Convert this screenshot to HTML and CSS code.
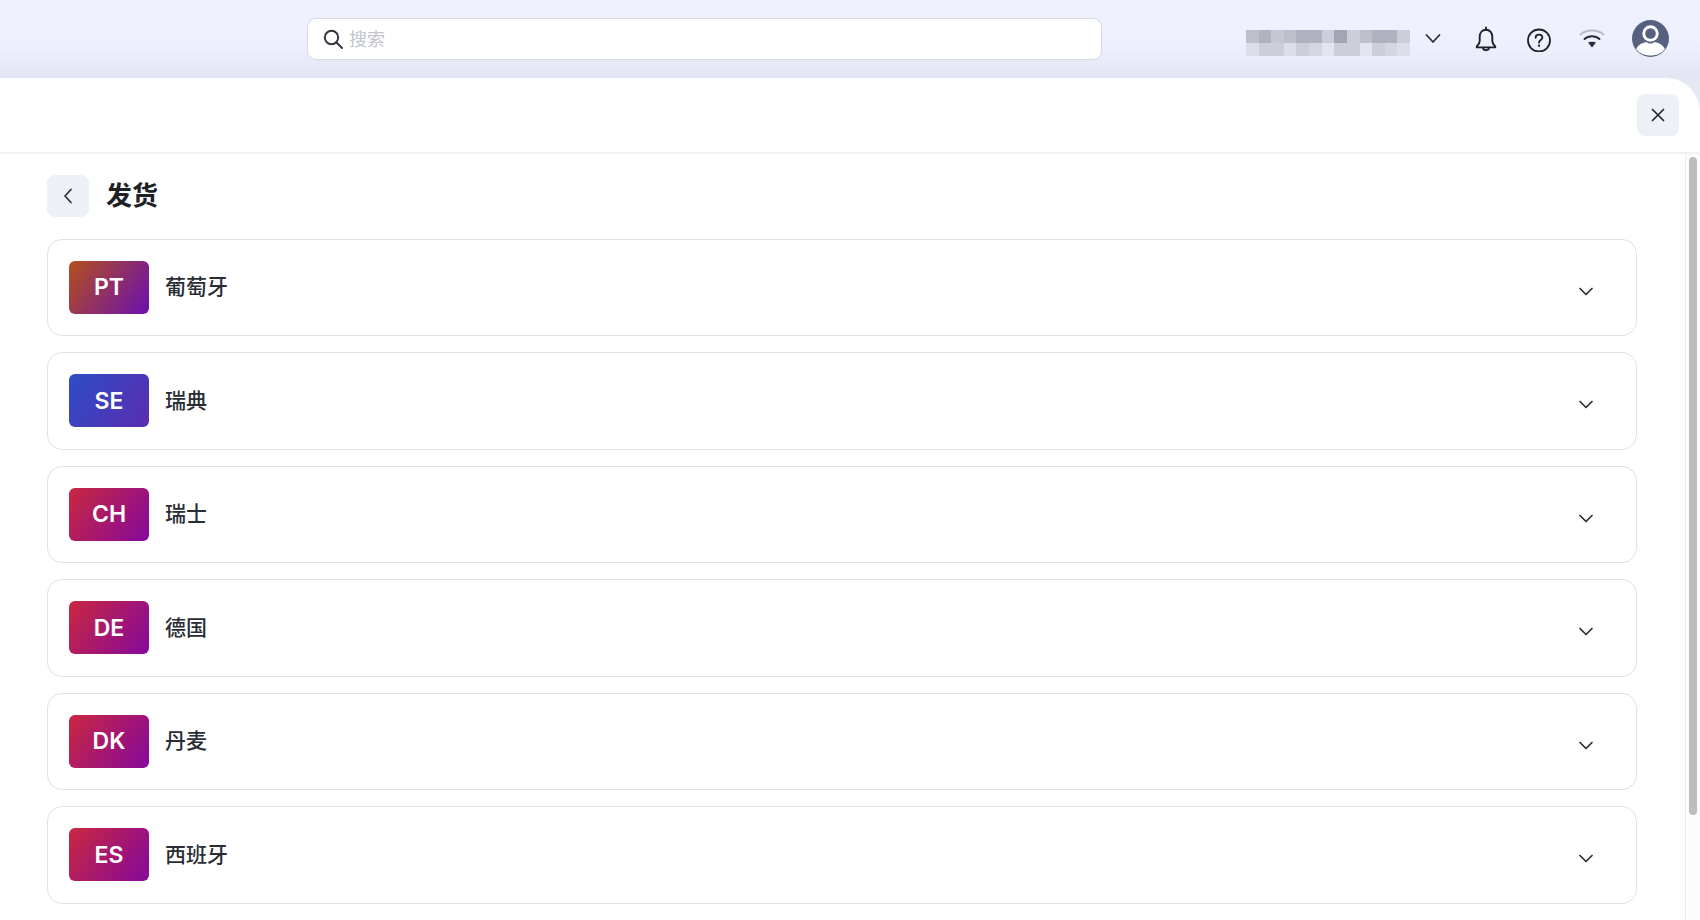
FILE: index.html
```html
<!DOCTYPE html>
<html lang="zh-CN">
<head>
<meta charset="utf-8">
<title>发货</title>
<link rel="stylesheet" href="styles.css">
</head>
<body>
<header class="topbar">
  <div class="search">
    <svg class="search-icon" viewBox="0 0 22 22" width="22" height="22" fill="none" stroke="#33363f" stroke-width="2" stroke-linecap="round"><circle cx="9.5" cy="9.5" r="6.7"/><path d="M14.5 14.5 20 20"/></svg>
    <span class="search-text">搜索</span>
  </div>
  <div class="account">
    <div class="mosaic">
      <i class="s3"></i><i class="s2"></i><i class="s4"></i><i class="s3"></i><i class="s2"></i><i class="s2"></i><i class="s5"></i><i class="s1"></i><i class="s5"></i><i class="s3"></i><i class="s2"></i><i class="s2"></i><i class="s5"></i>
      <i class="s7"></i><i class="s5"></i><i class="s5"></i><i class="s7"></i><i class="s5"></i><i class="s6"></i><i class="s8"></i><i class="s5"></i><i class="s5"></i><i class="s8"></i><i class="s5"></i><i class="s6"></i><i class="s7"></i>
    </div>
    <svg class="icon" viewBox="0 0 26 26" width="26" height="26" fill="none" stroke="#2b2e37" stroke-width="1.8" stroke-linecap="round" stroke-linejoin="round"><path d="M6.5 9 13 16 19.5 9"/></svg>
  </div>
  <svg class="icon" viewBox="0 0 26 26" width="26" height="26" fill="none" stroke="#1f2128" stroke-width="1.9" stroke-linejoin="round" stroke-linecap="round"><path d="M13 1.500V3.800"/><path d="M13 3.800C9 3.800 6.700 7 6.700 10.800V15C6.700 17.300 5.600 18.700 3.900 20.300 3.300 20.900 3.600 21.400 4.400 21.400H21.600C22.400 21.400 22.700 20.900 22.100 20.300 20.400 18.700 19.300 17.300 19.300 15V10.800C19.300 7 17 3.800 13 3.800Z"/><path d="M10 21.600C10 23.200 11.300 24.200 13 24.200S16 23.200 16 21.600"/></svg>
  <svg class="icon" viewBox="0 0 26 26" width="26" height="26" fill="none" stroke="#1f2128" stroke-width="1.8" stroke-linecap="round"><circle cx="13" cy="14.500" r="11"/><path d="M9.600 11.800C9.600 9.800 11.100 8.700 13 8.700 15 8.700 16.400 9.900 16.400 11.600 16.400 14.100 13 14.100 13 16.700"/><circle cx="13" cy="19.700" r=".6" fill="#1f2128" stroke-width="1.100"/></svg>
  <svg class="icon" viewBox="0 0 26 26" width="26" height="26" fill="none" stroke-linecap="round"><path d="M1.500 8.500C7.500 3.200 18.500 3.200 24.500 8.500" stroke="#b9bbc6" stroke-width="1.900"/><path d="M5.500 13C9.500 9.300 16.500 9.300 20.500 13" stroke="#2b2e37" stroke-width="1.900"/><path d="M9 16.600C11.200 15.500 14.800 15.500 17 16.600L13 21.500Z" fill="#2b2e37"/></svg>
  <svg class="avatar" viewBox="0 0 37 37" width="37" height="37"><circle cx="18.500" cy="18.500" r="18.500" fill="#56617f"/><circle cx="18.500" cy="13.500" r="8.200" fill="#fff"/><circle cx="18.500" cy="13.500" r="5.300" fill="#56617f"/><path d="M4 29C6.500 24.800 10.500 22.500 14.500 22.100 17 24.100 20 24.100 22.500 22.100 26.500 22.500 30.500 24.800 33 29 29.300 33.500 24.500 35.500 18.500 35.500S7.700 33.500 4 29Z" fill="#fff"/></svg>
</header>
<main class="panel">
  <div class="panel-head">
    <button class="square-btn" type="button" aria-label="关闭">
      <svg viewBox="0 0 14 14" width="14" height="14" fill="none" stroke="#23252c" stroke-width="1.7" stroke-linecap="round"><path d="M1.500 1.500 12.500 12.500M12.500 1.500 1.500 12.500"/></svg>
    </button>
  </div>
  <div class="body-row">
    <div class="scroller">
      <div class="title-row">
        <button class="square-btn" type="button" aria-label="返回">
          <svg viewBox="0 0 10 16" width="10" height="16" fill="none" stroke="#33363f" stroke-width="1.800" stroke-linecap="round" stroke-linejoin="round"><path d="M8 1.500 2 8 8 14.500"/></svg>
        </button>
        <h1 class="title">发货</h1>
      </div>
      <ul class="list">
        <li class="card"><span class="badge orange">PT</span><span class="name">葡萄牙</span><svg class="chev" viewBox="0 0 14 9" width="14" height="9" fill="none" stroke="#2b2e37" stroke-width="1.700" stroke-linecap="round" stroke-linejoin="round"><path d="M1 1.500 7 7.500 13 1.500"/></svg></li>
        <li class="card"><span class="badge blue">SE</span><span class="name">瑞典</span><svg class="chev" viewBox="0 0 14 9" width="14" height="9" fill="none" stroke="#2b2e37" stroke-width="1.700" stroke-linecap="round" stroke-linejoin="round"><path d="M1 1.500 7 7.500 13 1.500"/></svg></li>
        <li class="card"><span class="badge red">CH</span><span class="name">瑞士</span><svg class="chev" viewBox="0 0 14 9" width="14" height="9" fill="none" stroke="#2b2e37" stroke-width="1.700" stroke-linecap="round" stroke-linejoin="round"><path d="M1 1.500 7 7.500 13 1.500"/></svg></li>
        <li class="card"><span class="badge red">DE</span><span class="name">德国</span><svg class="chev" viewBox="0 0 14 9" width="14" height="9" fill="none" stroke="#2b2e37" stroke-width="1.700" stroke-linecap="round" stroke-linejoin="round"><path d="M1 1.500 7 7.500 13 1.500"/></svg></li>
        <li class="card"><span class="badge red">DK</span><span class="name">丹麦</span><svg class="chev" viewBox="0 0 14 9" width="14" height="9" fill="none" stroke="#2b2e37" stroke-width="1.700" stroke-linecap="round" stroke-linejoin="round"><path d="M1 1.500 7 7.500 13 1.500"/></svg></li>
        <li class="card"><span class="badge red">ES</span><span class="name">西班牙</span><svg class="chev" viewBox="0 0 14 9" width="14" height="9" fill="none" stroke="#2b2e37" stroke-width="1.700" stroke-linecap="round" stroke-linejoin="round"><path d="M1 1.500 7 7.500 13 1.500"/></svg></li>
        <li class="card"></li>
      </ul>
    </div>
    <div class="scrollbar"><div class="thumb"></div></div>
  </div>
</main>
</body>
</html>
```
FILE: styles.css
```css
* { box-sizing: border-box; }
html, body { height: 100%; }
body {
  margin: 0;
  height: 920px;
  overflow: hidden;
  display: flex;
  flex-direction: column;
  background: #e6e8f4;
  font-family: Inter, "Noto Sans CJK SC", sans-serif;
  color: #2a2d35;
}

/* top bar */
.topbar {
  flex: none;
  height: 78px;
  display: flex;
  align-items: center;
  gap: 27px;
  padding: 0 31px 0 307px;
  background: linear-gradient(180deg, #eff2fe 0%, #eef1fd 55%, #e3e5f2 100%);
}
.search {
  width: 795px;
  height: 42px;
  margin-right: auto;
  display: flex;
  align-items: center;
  gap: 5px;
  padding-left: 14px;
  background: #fff;
  border: 1.5px solid #d6d8e6;
  border-radius: 9px;
}
.search-icon { flex: none; }
.search-text { font-size: 18px; color: #c3c5cf; margin-bottom: 2px; }
.account { display: flex; align-items: center; gap: 10px; }
.mosaic {
  width: 164px;
  height: 26px;
  margin-top: 7px;
  display: grid;
  grid-template-columns: repeat(13, 1fr);
  grid-template-rows: repeat(2, 1fr);
}
.s1 { background: #a3a5b2; }
.s2 { background: #b0b2bf; }
.s3 { background: #bdbfcb; }
.s4 { background: #c5c7d3; }
.s5 { background: #cccedA; }
.s6 { background: #d4d6e1; }
.s7 { background: #dcdee8; }
.s8 { background: #e2e4ee; }
.icon { flex: none; display: block; }
.avatar { flex: none; display: block; margin-top: -2px; }

/* panel */
.panel {
  flex: 1;
  min-height: 0;
  display: flex;
  flex-direction: column;
  background: #fff;
  border-top-right-radius: 34px;
}
.panel-head {
  flex: none;
  height: 76px;
  display: flex;
  justify-content: flex-end;
  align-items: center;
  padding: 0 21px 0 0;
  border-bottom: 2px solid #f0f1f4;
}
.square-btn {
  width: 42px;
  height: 42px;
  padding: 0;
  display: flex;
  align-items: center;
  justify-content: center;
  border: 0;
  border-radius: 8px;
  background: #edf0f6;
}

/* body: content column and its scrollbar */
.body-row {
  flex: 1;
  min-height: 0;
  display: flex;
}
.scroller {
  flex: 1;
  min-width: 0;
  overflow: hidden;
  padding: 21px 48px 0 47px;
}
.scrollbar {
  flex: none;
  width: 15px;
  padding: 3px 3px 0;
  background: #fcfcfc;
  border-left: 1px solid #ebebeb;
}
.thumb {
  width: 8px;
  height: 658px;
  border-radius: 4px;
  background: #bdbdbd;
}
.title-row {
  display: flex;
  align-items: center;
  gap: 17px;
  margin-bottom: 21.5px;
}
.title {
  margin: 0;
  font-size: 26px;
  font-weight: 600;
  line-height: 42px;
  color: #1e2026;
}
.list {
  margin: 0;
  padding: 0;
  list-style: none;
  display: flex;
  flex-direction: column;
  gap: 16px;
}
.card {
  flex: none;
  height: 97.5px;
  display: flex;
  align-items: center;
  gap: 16px;
  padding: 0 43px 0 21px;
  border: 1.5px solid #dfe0ea;
  border-radius: 15px;
}
.badge {
  flex: none;
  width: 80px;
  height: 53px;
  display: flex;
  align-items: center;
  justify-content: center;
  border-radius: 6px;
  font-size: 23px;
  font-weight: 600;
  color: #fff;
}
.orange { background: linear-gradient(125deg, #b4501c 0%, #6a10b0 100%); }
.blue { background: linear-gradient(125deg, #2e4cc6 0%, #5a2db0 100%); }
.red { background: linear-gradient(125deg, #c9283f 0%, #85089c 100%); }
.name { flex: 1; font-size: 21px; font-weight: 500; color: #2a2d35; margin-bottom: 4px; }
.chev { flex: none; margin-top: 8px; }
```
